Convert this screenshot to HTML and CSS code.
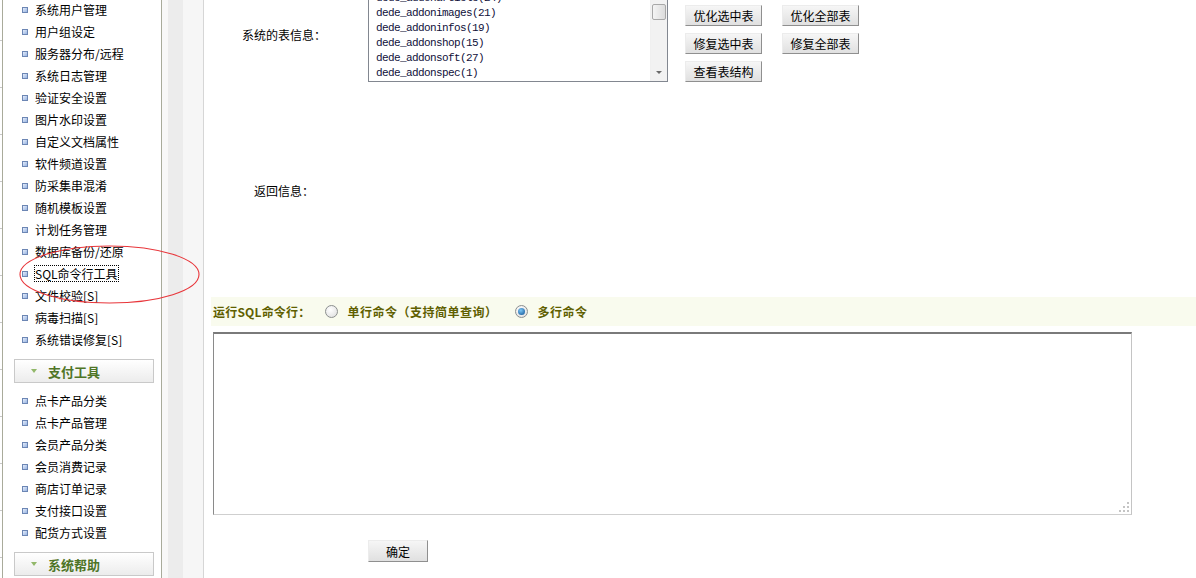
FILE: index.html
```html
<!DOCTYPE html>
<html lang="zh-CN">
<head>
<meta charset="utf-8">
<title>SQL命令行工具</title>
<link rel="stylesheet" href="styles.css">
</head>
<body>
<div class="frame">
  <div class="edge"></div>
  <aside class="sidebar">
    <ul class="menu">
      <li><span class="dot"></span>系统用户管理</li>
      <li><span class="dot"></span>用户组设定</li>
      <li><span class="dot"></span>服务器分布/远程</li>
      <li><span class="dot"></span>系统日志管理</li>
      <li><span class="dot"></span>验证安全设置</li>
      <li><span class="dot"></span>图片水印设置</li>
      <li><span class="dot"></span>自定义文档属性</li>
      <li><span class="dot"></span>软件频道设置</li>
      <li><span class="dot"></span>防采集串混淆</li>
      <li><span class="dot"></span>随机模板设置</li>
      <li><span class="dot"></span>计划任务管理</li>
      <li><span class="dot"></span>数据库备份/还原</li>
      <li><span class="dot"></span><span class="focus">SQL命令行工具</span></li>
      <li><span class="dot"></span>文件校验[S]</li>
      <li><span class="dot"></span>病毒扫描[S]</li>
      <li><span class="dot"></span>系统错误修复[S]</li>
    </ul>
    <div class="group group-first"><span class="arrow"></span>支付工具</div>
    <ul class="menu">
      <li><span class="dot"></span>点卡产品分类</li>
      <li><span class="dot"></span>点卡产品管理</li>
      <li><span class="dot"></span>会员产品分类</li>
      <li><span class="dot"></span>会员消费记录</li>
      <li><span class="dot"></span>商店订单记录</li>
      <li><span class="dot"></span>支付接口设置</li>
      <li><span class="dot"></span>配货方式设置</li>
    </ul>
    <div class="group"><span class="arrow"></span>系统帮助</div>
  </aside>
  <div class="gutter">
    <div class="g1"></div>
    <div class="g2"></div>
    <div class="g3"></div>
  </div>
  <main class="main">
    <div class="row-tables">
      <div class="label-cell">系统的表信息：</div>
      <div class="list-cell">
        <div class="listbox">
          <ul class="options">
            <li>dede_addonarticle(24)</li>
            <li>dede_addonimages(21)</li>
            <li>dede_addoninfos(19)</li>
            <li>dede_addonshop(15)</li>
            <li>dede_addonsoft(27)</li>
            <li>dede_addonspec(1)</li>
          </ul>
          <div class="vscroll">
            <div class="thumb"></div>
            <div class="down"></div>
          </div>
        </div>
      </div>
      <div class="btns">
        <button class="btn">优化选中表</button>
        <button class="btn">优化全部表</button>
        <button class="btn">修复选中表</button>
        <button class="btn">修复全部表</button>
        <button class="btn">查看表结构</button>
      </div>
    </div>
    <div class="row-result">
      <div class="label-cell">返回信息：</div>
      <div class="result-body"></div>
    </div>
    <div class="sqlbar">
      <span class="sqltitle">运行SQL命令行：</span>
      <span class="radio"></span>
      <span class="ropt">单行命令（支持简单查询）</span>
      <span class="radio radio-on"></span>
      <span class="ropt">多行命令</span>
    </div>
    <div class="sqlwrap">
      <textarea class="sqlbox"></textarea>
      <svg class="grip" width="12" height="12" viewBox="0 0 12 12"><g fill="#c4c4c4"><rect x="9" y="1" width="2" height="2"/><rect x="5" y="5" width="2" height="2"/><rect x="9" y="5" width="2" height="2"/><rect x="1" y="9" width="2" height="2"/><rect x="5" y="9" width="2" height="2"/><rect x="9" y="9" width="2" height="2"/></g></svg>
    </div>
    <div class="submit-row"><button class="btn btn-ok">确定</button></div>
  </main>
  <svg class="annot" width="220" height="320" viewBox="0 0 220 320"><ellipse cx="109.5" cy="274.5" rx="89.5" ry="28.5" fill="none" stroke="#e8353a" stroke-width="1.1"/></svg>
</div>
</body>
</html>
```
FILE: styles.css
```css
* { box-sizing: border-box; }
html, body { margin: 0; padding: 0; }
body {
  width: 1196px;
  height: 578px;
  overflow: hidden;
  background: #fff;
  font-family: "Noto Sans CJK SC", "Liberation Sans", sans-serif;
  font-size: 12px;
  color: #000;
}
.frame {
  position: relative;
  display: flex;
  height: 578px;
}
.edge {
  width: 2px;
  flex: none;
  background: repeating-linear-gradient(to bottom, #fff 0, #fff 40px, #c8c8c8 40px, #c8c8c8 41px, #fff 41px, #fff 47px);
}
.sidebar {
  width: 160px;
  flex: none;
  border-left: 1px solid #a9ab9b;
  border-right: 1px solid #a9ab9b;
  background: #fff;
}
.menu {
  list-style: none;
  margin: 0;
  padding: 0;
}
.menu li {
  display: flex;
  align-items: center;
  height: 22px;
  padding-left: 19px;
  padding-bottom: 3px;
  white-space: nowrap;
  font-size: 12px;
}
.dot {
  width: 6px;
  height: 6px;
  margin-right: 7px;
  border: 1px solid #6c86b4;
  background: linear-gradient(135deg, #e6eefb, #98b4e2);
  flex: none;
}
.focus {
  outline: 1px dotted #000;
  outline-offset: 0;
  line-height: 15px;
}
.group {
  display: flex;
  align-items: center;
  width: 140px;
  height: 24px;
  margin: 7px 0 7px 11px;
  border: 1px solid #c9c9c9;
  background: linear-gradient(#ffffff, #ececec);
  color: #4f7526;
  font-weight: bold;
  font-size: 13px;
  padding-left: 16px;
}
.group-first { margin-bottom: 8px; }
.arrow {
  width: 0;
  height: 0;
  border-left: 3px solid transparent;
  border-right: 3px solid transparent;
  border-top: 4px solid #92b86a;
  margin-right: 11px;
}
.gutter {
  display: flex;
  width: 42px;
  flex: none;
  border-right: 1px solid #d6d6d6;
}
.g1 { width: 6px; background: #f8f8f8; }
.g2 { width: 15px; background: #ececec; }
.g3 { flex: 1; background: #f6f6f6; }
.main {
  flex: 1;
  min-width: 0;
  overflow: hidden;
}
.row-tables {
  display: flex;
  margin-top: -14px;
  height: 96px;
}
.label-cell {
  width: 160px;
  flex: none;
  display: flex;
  align-items: center;
  justify-content: center;
  font-size: 12px;
}
.list-cell { padding-left: 4px; }
.listbox {
  position: relative;
  width: 300px;
  height: 96px;
  border: 1px solid #828790;
  overflow: hidden;
  background: #fff;
}
.options {
  list-style: none;
  margin: 0;
  padding: 4px 0 0 7px;
}
.options li {
  height: 15px;
  line-height: 15px;
  font-family: "Liberation Mono", monospace;
  font-size: 11px;
  letter-spacing: -0.6px;
  color: #10103a;
}
.vscroll {
  position: absolute;
  top: 0;
  right: 0;
  bottom: 0;
  width: 17px;
  background: #f2f2f2;
  border-left: 1px solid #f0f0f0;
}
.thumb {
  position: absolute;
  left: 1px;
  right: 1px;
  top: 17px;
  height: 16px;
  border: 1px solid #a8a8a8;
  border-radius: 2px;
  background: linear-gradient(to right, #f4f4f4, #dcdcdc);
}
.down {
  position: absolute;
  left: 5px;
  bottom: 7px;
  width: 0;
  height: 0;
  border-left: 3px solid transparent;
  border-right: 3px solid transparent;
  border-top: 3px solid #6a6a6a;
}
.btns {
  display: grid;
  grid-template-columns: 77px 77px;
  grid-auto-rows: 21px;
  gap: 7px 20px;
  margin-left: 17px;
  margin-top: 19px;
  align-self: flex-start;
}
.btn {
  width: 77px;
  height: 21px;
  padding: 0;
  margin: 0;
  font-family: "Noto Sans CJK SC", "Liberation Sans", sans-serif;
  font-size: 12px;
  color: #000;
  background: linear-gradient(#f6f6f6, #e0e0e0);
  border: 1px solid;
  border-color: #ececec #8f8f8f #8f8f8f #ececec;
  border-radius: 0;
  line-height: 19px;
}
.row-result {
  display: flex;
  height: 215px;
  padding-top: 2px;
}
.result-body { flex: 1; }
.sqlbar {
  display: flex;
  align-items: center;
  height: 29px;
  margin-left: 7px;
  padding-left: 2px;
  background: #f9fbee;
  color: #5f5f00;
  font-weight: bold;
  font-size: 12px;
  white-space: nowrap;
}
.sqltitle { letter-spacing: 0.2px; }
.radio {
  width: 13px;
  height: 13px;
  border-radius: 50%;
  border: 1px solid #8c8f8f;
  background: radial-gradient(circle at 40% 35%, #ffffff, #dcdcdc);
  flex: none;
  margin-left: 15px;
  margin-right: 9px;
  position: relative;
}
.radio-on { margin-left: 18px; margin-right: 9px; }
.radio-on::after {
  content: "";
  position: absolute;
  left: 2px;
  top: 2px;
  width: 7px;
  height: 7px;
  border-radius: 50%;
  background: radial-gradient(circle at 40% 35%, #7cc6f5, #0b4f91);
}
.ropt { letter-spacing: 0.5px; }
.sqlwrap {
  position: relative;
  width: 919px;
  height: 183px;
  margin: 6px 0 0 9px;
}
.sqlbox {
  display: block;
  width: 919px;
  height: 183px;
  margin: 0;
  resize: none;
  border: 1px solid;
  border-color: #7a7a7a #c4c4c4 #cfcfcf #8a8a8a;
  border-top-width: 2px;
  background: #fff;
  outline: none;
}
.grip {
  position: absolute;
  right: 2px;
  bottom: 2px;
}
.submit-row {
  margin-top: 25px;
  padding-left: 164px;
}
.btn-ok { width: 60px; height: 22px; }
.annot {
  position: absolute;
  left: 0;
  top: 0;
  pointer-events: none;
}
```
